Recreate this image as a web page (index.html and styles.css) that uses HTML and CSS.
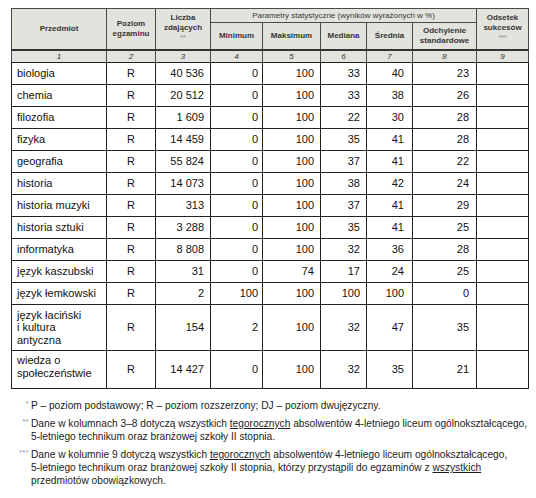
FILE: index.html
```html
<!DOCTYPE html>
<html lang="pl">
<head>
<meta charset="utf-8">
<link rel="stylesheet" href="styles.css">
</head>
<body>
<table class="stats">
  <colgroup>
    <col class="c1"><col class="c2"><col class="c3"><col class="c4"><col class="c5"><col class="c6"><col class="c7"><col class="c8"><col class="c9">
  </colgroup>
  <thead>
    <tr class="h1">
      <th rowspan="2">Przedmiot</th>
      <th rowspan="2">Poziom<br>egzaminu</th>
      <th rowspan="2" class="up">Liczba<br>zdających<br><span class="star">**</span></th>
      <th colspan="5" class="group">Parametry statystyczne (wyników wyrażonych w %)</th>
      <th rowspan="2" class="up">Odsetek<br>sukcesów<br><span class="star">***</span></th>
    </tr>
    <tr class="h2">
      <th>Minimum</th>
      <th>Maksimum</th>
      <th>Mediana</th>
      <th>Średnia</th>
      <th>Odchylenie<br>standardowe</th>
    </tr>
    <tr class="nums">
      <th>1</th><th>2</th><th>3</th><th>4</th><th>5</th><th>6</th><th>7</th><th>8</th><th>9</th>
    </tr>
  </thead>
  <tbody>
    <tr><td class="name">biologia</td><td class="lvl">R</td><td class="n3">40 536</td><td class="n4">0</td><td class="n5">100</td><td class="n6">33</td><td class="n7">40</td><td class="n8">23</td><td></td></tr>
    <tr><td class="name">chemia</td><td class="lvl">R</td><td class="n3">20 512</td><td class="n4">0</td><td class="n5">100</td><td class="n6">33</td><td class="n7">38</td><td class="n8">26</td><td></td></tr>
    <tr><td class="name">filozofia</td><td class="lvl">R</td><td class="n3">1 609</td><td class="n4">0</td><td class="n5">100</td><td class="n6">22</td><td class="n7">30</td><td class="n8">28</td><td></td></tr>
    <tr><td class="name">fizyka</td><td class="lvl">R</td><td class="n3">14 459</td><td class="n4">0</td><td class="n5">100</td><td class="n6">35</td><td class="n7">41</td><td class="n8">28</td><td></td></tr>
    <tr><td class="name">geografia</td><td class="lvl">R</td><td class="n3">55 824</td><td class="n4">0</td><td class="n5">100</td><td class="n6">37</td><td class="n7">41</td><td class="n8">22</td><td></td></tr>
    <tr><td class="name">historia</td><td class="lvl">R</td><td class="n3">14 073</td><td class="n4">0</td><td class="n5">100</td><td class="n6">38</td><td class="n7">42</td><td class="n8">24</td><td></td></tr>
    <tr><td class="name">historia muzyki</td><td class="lvl">R</td><td class="n3">313</td><td class="n4">0</td><td class="n5">100</td><td class="n6">37</td><td class="n7">41</td><td class="n8">29</td><td></td></tr>
    <tr><td class="name">historia sztuki</td><td class="lvl">R</td><td class="n3">3 288</td><td class="n4">0</td><td class="n5">100</td><td class="n6">35</td><td class="n7">41</td><td class="n8">25</td><td></td></tr>
    <tr><td class="name">informatyka</td><td class="lvl">R</td><td class="n3">8 808</td><td class="n4">0</td><td class="n5">100</td><td class="n6">32</td><td class="n7">36</td><td class="n8">28</td><td></td></tr>
    <tr><td class="name">język kaszubski</td><td class="lvl">R</td><td class="n3">31</td><td class="n4">0</td><td class="n5">74</td><td class="n6">17</td><td class="n7">24</td><td class="n8">25</td><td></td></tr>
    <tr><td class="name">język łemkowski</td><td class="lvl">R</td><td class="n3">2</td><td class="n4">100</td><td class="n5">100</td><td class="n6">100</td><td class="n7">100</td><td class="n8">0</td><td></td></tr>
    <tr class="tall"><td class="name multi">język łaciński<br>i kultura<br>antyczna</td><td class="lvl">R</td><td class="n3">154</td><td class="n4">2</td><td class="n5">100</td><td class="n6">32</td><td class="n7">47</td><td class="n8">35</td><td></td></tr>
    <tr class="last"><td class="name multi top">wiedza o<br>społeczeństwie</td><td class="lvl">R</td><td class="n3">14 427</td><td class="n4">0</td><td class="n5">100</td><td class="n6">32</td><td class="n7">35</td><td class="n8">21</td><td></td></tr>
  </tbody>
</table>

<div class="notes">
  <div class="note">
    <span class="mark">*</span>
    <p>P – poziom podstawowy; R – poziom rozszerzony; DJ – poziom dwujęzyczny.</p>
  </div>
  <div class="note">
    <span class="mark">**</span>
    <p>Dane w kolumnach 3–8 dotyczą wszystkich <u>tegorocznych</u> absolwentów 4-letniego liceum ogólnokształcącego,<br>5-letniego technikum oraz branżowej szkoły II stopnia.</p>
  </div>
  <div class="note">
    <span class="mark">***</span>
    <p>Dane w kolumnie 9 dotyczą wszystkich <u>tegorocznych</u> absolwentów 4-letniego liceum ogólnokształcącego,<br>5-letniego technikum oraz branżowej szkoły II stopnia, którzy przystąpili do egzaminów z <u>wszystkich</u><br>przedmiotów obowiązkowych.</p>
  </div>
</div>
</body>
</html>
```

FILE: styles.css
```css
html, body {
  margin: 0;
  padding: 0;
  background: #ffffff;
}

body {
  font-family: "Liberation Sans", Arial, sans-serif;
  color: #141414;
  width: 536px;
  height: 498px;
  overflow: hidden;
}

.stats {
  border-collapse: collapse;
  table-layout: fixed;
  width: 518px;
  margin: 8px 0 0 11px;
}

.c1 { width: 95px; }
.c2 { width: 49px; }
.c3 { width: 55px; }
.c4 { width: 52px; }
.c5 { width: 58px; }
.c6 { width: 46px; }
.c7 { width: 46px; }
.c8 { width: 64px; }
.c9 { width: 52px; }

.stats th,
.stats td {
  border: 1px solid #222;
  padding: 0;
}

.stats th {
  background: #e3e3de;
  color: #353535;
  font-size: 8px;
  font-weight: bold;
  line-height: 10px;
  text-align: center;
  vertical-align: middle;
  border-color: #4a4a4a;
}

.stats th.up {
  padding-bottom: 3px;
}

.stats th.group {
  font-weight: normal;
  height: 13px;
}

.h2 th {
  height: 26px;
}

.star {
  font-weight: normal;
  color: #8a8a8a;
  font-size: 7px;
}

.nums th {
  font-weight: normal;
  font-style: italic;
  height: 11px;
  line-height: 10px;
  color: #303030;
  border-top: 2px solid #333;
  border-bottom: 1px solid #222;
}

.stats td {
  height: 21px;
  font-size: 11px;
  line-height: 12.5px;
  text-align: right;
  vertical-align: middle;
  color: #111;
}

.stats td.name {
  text-align: left;
  padding-left: 5px;
}

.stats td.lvl {
  text-align: center;
}

.stats td.top {
  vertical-align: top;
  padding-top: 3px;
}

.n3 { padding-right: 6px !important; }
.n4 { padding-right: 4px !important; }
.n5 { padding-right: 6px !important; }
.n6 { padding-right: 6px !important; }
.n7 { padding-right: 8px !important; }
.n8 { padding-right: 7px !important; }

.stats tr.tall td {
  height: 45px;
}

.stats tr.last td {
  height: 34px;
}

.notes {
  margin-top: 10px;
  display: flex;
  flex-direction: column;
  gap: 5px;
}

.note {
  display: flex;
  align-items: flex-start;
  font-size: 10.2px;
  line-height: 13px;
  color: #1c1c1c;
}

.mark {
  width: 29px;
  flex: none;
  text-align: right;
  padding-right: 2px;
  font-size: 7px;
  line-height: 10px;
  color: #8a8a8a;
  letter-spacing: 0.5px;
}

.note p {
  margin: 0;
  white-space: nowrap;
}

.note u {
  text-underline-offset: 1px;
}
```
